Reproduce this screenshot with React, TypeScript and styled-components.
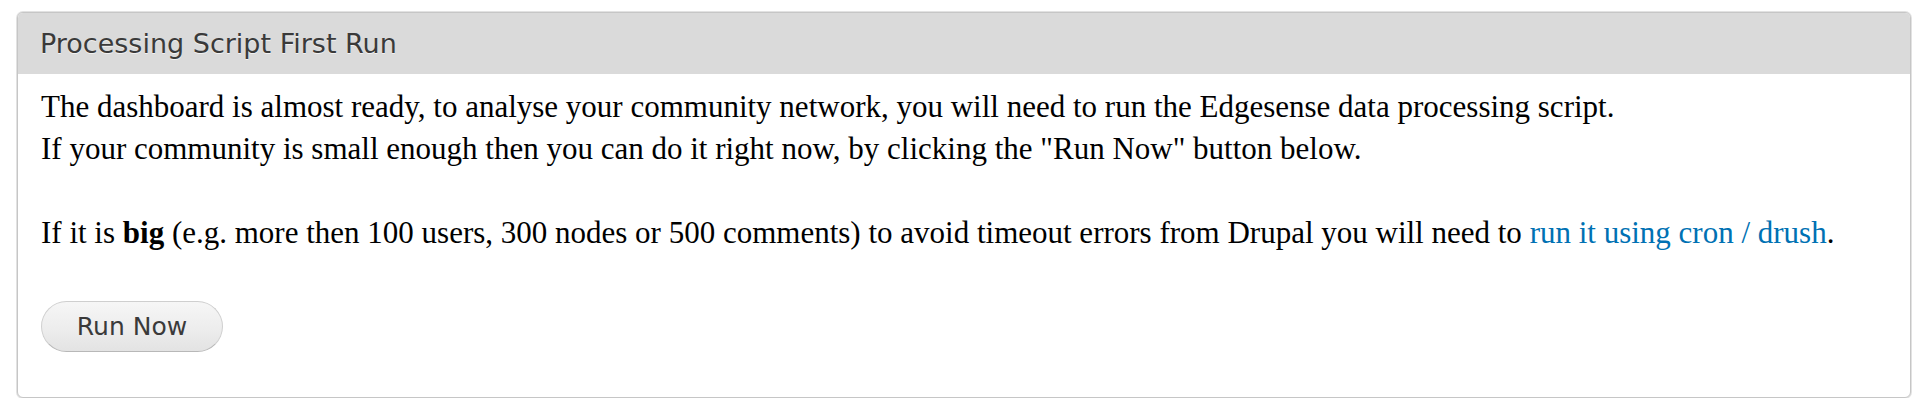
import styled, { createGlobalStyle } from 'styled-components';

const GlobalStyle = createGlobalStyle`
  html, body {
    margin: 0;
    padding: 0;
    background: #fff;
  }
`;

const Page = styled.div`
  padding: 12px 13px 0 17px;
`;

const Panel = styled.section`
  border: 1px solid #c6c6c6;
  box-shadow: 0 0 0 1px #e2e2e2;
  border-radius: 6px;
  overflow: hidden;
  background: #fff;
`;

const PanelHeader = styled.h2`
  margin: 0;
  height: 61px;
  display: flex;
  align-items: center;
  padding: 0 22px;
  background: #dadada;
  font-family: "DejaVu Sans", "Open Sans", sans-serif;
  font-weight: normal;
  font-size: 27px;
  color: #3a3a3a;
  text-shadow: 0 1px 0 #f2f2f2;
`;

const PanelBody = styled.div`
  padding: 12px 23px 45px;
  font-family: "Liberation Serif", "DejaVu Serif", serif;
  font-size: 31px;
  line-height: 42px;
  color: #000;
`;

const Para = styled.p<{ $last?: boolean }>`
  margin: 0 0 ${p => (p.$last ? 0 : 42)}px;
`;

const Link = styled.a`
  color: #0071b3;
  text-decoration: none;
`;

const Button = styled.button`
  display: flex;
  align-items: center;
  justify-content: center;
  width: 182px;
  height: 51px;
  margin-top: 47px;
  padding: 0;
  border: 1px solid #cfcfcf;
  border-bottom-color: #b8b8b8;
  border-radius: 26px;
  background: linear-gradient(to bottom, #f6f6f6 0%, #ececec 60%, #e3e3e3 100%);
  font-family: "DejaVu Sans", "Open Sans", sans-serif;
  font-size: 25px;
  color: #3a3a3a;
  cursor: pointer;
`;

export default function App() {
  return (
    <>
      <GlobalStyle />
      <Page>
        <Panel>
          <PanelHeader>Processing Script First Run</PanelHeader>
          <PanelBody>
            <Para>
              The dashboard is almost ready, to analyse your community network, you will need to run the Edgesense data processing script.
              <br />
              If your community is small enough then you can do it right now, by clicking the "Run Now" button below.
            </Para>
            <Para $last>
              If it is <b>big</b> (e.g. more then 100 users, 300 nodes or 500 comments) to avoid timeout errors from Drupal you will need to{' '}
              <Link href="#">run it using cron / drush</Link>.
            </Para>
            <Button type="button">Run Now</Button>
          </PanelBody>
        </Panel>
      </Page>
    </>
  );
}
